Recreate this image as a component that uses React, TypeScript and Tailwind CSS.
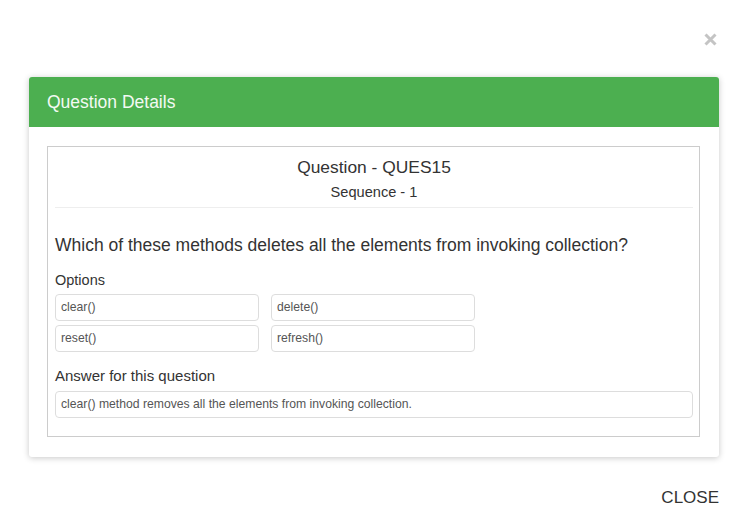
import React from 'react';

const options = ['clear()', 'delete()', 'reset()', 'refresh()'];

export default function App() {
  return (
    <div
      className="w-[746px] h-[531px] bg-white text-[#333]"
      style={{ fontFamily: '"Liberation Sans", Arial, sans-serif' }}
    >
      <div className="h-[77px] flex justify-end items-start pt-[33px] pr-[29px]">
        <svg width="13" height="13" viewBox="0 0 13 13">
          <path d="M1.5 1.5 L11.5 11.5 M11.5 1.5 L1.5 11.5" stroke="#c4c4c4" strokeWidth="3" />
        </svg>
      </div>

      <div className="ml-[29px] w-[690px]">
        <div className="rounded-[3px] bg-white shadow-[0_1px_6px_rgba(0,0,0,0.22)] overflow-hidden">
          <div className="h-[50px] bg-[#4caf50] px-[18px] flex items-center text-[17.5px] text-[#f3faf3]">
            Question Details
          </div>
          <div className="pt-[19px] pb-[20px] pl-[18px] pr-[19px]">
            <div className="border border-[#ccc] pl-[7px] pr-[6px] pt-[10px] pb-[18px]">
              <div className="text-center text-[17.4px] leading-[20px]">Question - QUES15</div>
              <div className="text-center text-[14.6px] leading-[18px] mt-[6px]">Sequence - 1</div>
              <div className="border-t border-[#eee] mt-[6px]" />
              <div className="text-[17.5px] leading-[22px] mt-[26px]">
                Which of these methods deletes all the elements from invoking collection?
              </div>
              <div className="text-[14.5px] leading-[18px] mt-[15px]">Options</div>
              <div className="grid grid-cols-[204px_204px] gap-x-[12px] gap-y-[4px] mt-[5px]">
                {options.map((o) => (
                  <div
                    key={o}
                    className="h-[27px] border border-[#ddd] rounded-[4px] px-[5px] flex items-center text-[12.2px] text-[#555]"
                  >
                    {o}
                  </div>
                ))}
              </div>
              <div className="text-[15px] leading-[18px] mt-[15px]">Answer for this question</div>
              <div className="h-[27px] border border-[#ddd] rounded-[4px] px-[5px] flex items-center text-[12.2px] text-[#555] mt-[6px]">
                clear() method removes all the elements from invoking collection.
              </div>
            </div>
          </div>
        </div>
        <div className="mt-[31px] text-right text-[17px] leading-[20px]">CLOSE</div>
      </div>
    </div>
  );
}
